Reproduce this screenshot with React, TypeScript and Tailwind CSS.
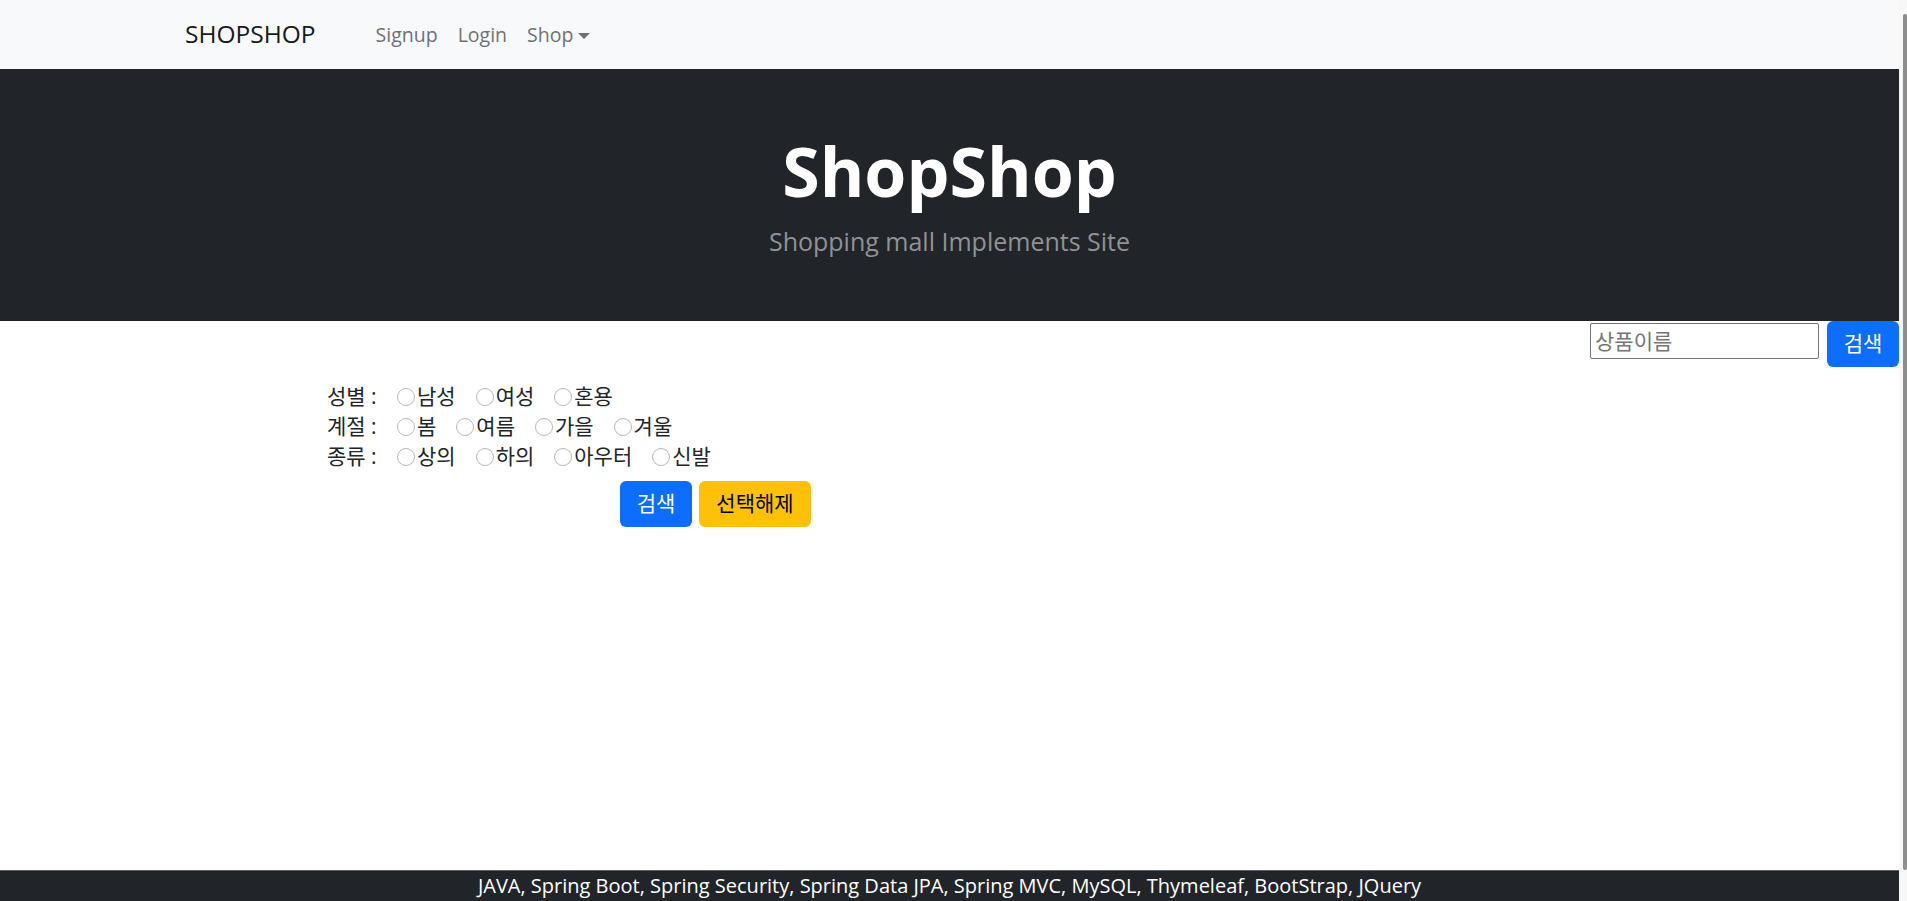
const filters = [
  { label: '성별', options: ['남성', '여성', '혼용'] },
  { label: '계절', options: ['봄', '여름', '가을', '겨울'] },
  { label: '종류', options: ['상의', '하의', '아우터', '신발'] },
]

function Radio({ text }: { text: string }) {
  return (
    <label className="flex items-center gap-[2px]">
      <span className="w-[18px] h-[18px] rounded-full border border-[#b8b8b8] bg-white" />
      <span>{text}</span>
    </label>
  )
}

export default function App() {
  return (
    <div className="flex h-[901px] overflow-hidden bg-white font-['Open_Sans','Noto_Sans_CJK_KR',sans-serif] text-[#212529]">
      <div className="flex flex-col w-[1899px]">
        <nav className="flex items-center h-[69px] bg-[#f8f9fa] pl-[185px]">
          <a className="text-[24.5px] text-[#1a1a1a] mr-[50px]">SHOPSHOP</a>
          <div className="flex items-center text-[19.5px] text-[#707172]">
            <a className="px-[10px]">Signup</a>
            <a className="px-[10px]">Login</a>
            <a className="flex items-center px-[10px]">
              Shop
              <span className="ml-[5px] mt-[2px] w-0 h-0 border-x-[6px] border-x-transparent border-t-[6px] border-t-[#707172]" />
            </a>
          </div>
        </nav>

        <header className="h-[252px] bg-[#212529] pt-[60px] text-center">
          <h1 className="text-[68px] leading-[84px] font-bold text-white mb-[10px]">ShopShop</h1>
          <p className="text-[25px] leading-[37.5px] text-[#909294]">Shopping mall Implements Site</p>
        </header>

        <div className="flex justify-end items-start gap-[8px]">
          <input
            className="mt-[2px] w-[229px] h-[36px] border border-[#767676] rounded-[2px] px-[4px] text-[21px] placeholder:text-[#757575] outline-none"
            placeholder="상품이름"
          />
          <button className="h-[46px] w-[72px] rounded-[6px] bg-[#0d6efd] text-white text-[21px]">검색</button>
        </div>

        <form className="pl-[327px] mt-[15px] text-[21px]">
          {filters.map((f) => (
            <div key={f.label} className="flex items-center h-[30px]">
              <span className="w-[70px]">{f.label} :</span>
              <div className="flex items-center gap-[20px]">
                {f.options.map((o) => (
                  <Radio key={o} text={o} />
                ))}
              </div>
            </div>
          ))}
          <div className="flex gap-[7px] ml-[293px] mt-[9px]">
            <button type="button" className="h-[46px] w-[72px] rounded-[6px] bg-[#0d6efd] text-white">검색</button>
            <button type="button" className="h-[46px] w-[112px] rounded-[6px] bg-[#ffc107] text-black">선택해제</button>
          </div>
        </form>

        <div className="flex-1" />

        <footer className="h-[31px] bg-[#212529] border-t border-[#5c6166] text-center text-white text-[20px] leading-[30px]">
          JAVA, Spring Boot, Spring Security, Spring Data JPA, Spring MVC, MySQL, Thymeleaf, BootStrap, JQuery
        </footer>
      </div>

      <div className="w-[8px] bg-[#f7f7f7] py-[14px] flex justify-end">
        <div className="w-[4px] h-[856px] rounded-full bg-[#8d8d8d]" />
      </div>
    </div>
  )
}
